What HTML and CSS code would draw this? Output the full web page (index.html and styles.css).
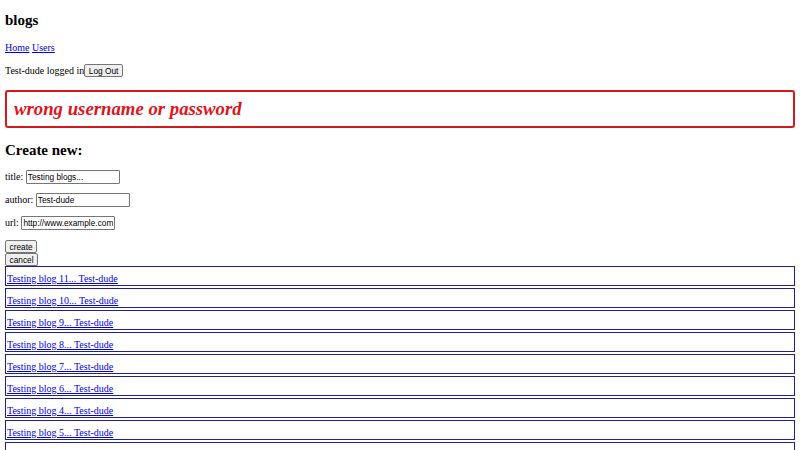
FILE: index.html
```html
<!DOCTYPE html>
<html>
<head>
<meta charset="utf-8">
<link rel="stylesheet" href="styles.css">
</head>
<body>
  <h2 class="title title-top">blogs</h2>
  <div class="nav"><a href="#">Home</a> <a href="#">Users</a></div>
  <p class="login">Test-dude logged in<button class="btn">Log Out</button></p>
  <div class="error">wrong username or password</div>
  <h2 class="title title-form">Create new:</h2>
  <form class="form">
    <div class="field">title: <input class="inp" value="Testing blogs..."></div>
    <div class="field">author: <input class="inp" value="Test-dude"></div>
    <div class="field">url: <input class="inp" value="http://www.example.com"></div>
    <div class="actions">
      <button class="btn" type="button">create</button>
      <button class="btn" type="button">cancel</button>
    </div>
  </form>
  <div class="blogs">
    <div class="blog"><a href="#">Testing blog 11... Test-dude</a></div>
    <div class="blog"><a href="#">Testing blog 10... Test-dude</a></div>
    <div class="blog"><a href="#">Testing blog 9... Test-dude</a></div>
    <div class="blog"><a href="#">Testing blog 8... Test-dude</a></div>
    <div class="blog"><a href="#">Testing blog 7... Test-dude</a></div>
    <div class="blog"><a href="#">Testing blog 6... Test-dude</a></div>
    <div class="blog"><a href="#">Testing blog 4... Test-dude</a></div>
    <div class="blog"><a href="#">Testing blog 5... Test-dude</a></div>
    <div class="blog"><a href="#">Testing blog 3... Test-dude</a></div>
  </div>
</body>
</html>
```
FILE: styles.css
```css
html, body {
  background: #fff;
}
body {
  margin: 5px;
  font-family: "Liberation Serif", "Times New Roman", serif;
  font-size: 10px;
  color: #000;
}
a {
  color: #0000ee;
}
.title {
  font-size: 15px;
  font-weight: bold;
  margin: 12.5px 0;
}
.title-top {
  margin-top: 6.5px;
  margin-bottom: 13.5px;
}
.title-form {
  margin-top: 13.5px;
  margin-bottom: 11.5px;
}
.nav {
  margin: 0;
}
.login {
  margin: 11px 0;
}
.btn {
  font-family: "Liberation Sans", Arial, sans-serif;
  font-size: 8.3px;
  padding: 0.5px 3.5px;
  margin: 0;
  border: 1px solid #767676;
  border-radius: 2px;
  background: #efefef;
  color: #000;
}
.error {
  color: #e0141c;
  font-size: 18.75px;
  font-weight: bold;
  font-style: italic;
  border: 2px solid #d5181e;
  border-radius: 3px;
  padding: 6px 7px;
  margin-top: 13px;
}
.form {
  margin: 0;
}
.field {
  margin: 9px 0;
}
.inp {
  font-family: "Liberation Sans", Arial, sans-serif;
  font-size: 8.3px;
  width: 90px;
  padding: 1px 1px;
  border: 1px solid #767676;
  border-radius: 1px;
}
.actions {
  display: flex;
  flex-direction: column;
  align-items: flex-start;
  margin-top: 10px;
}
.blogs {
  display: flex;
  flex-direction: column;
  gap: 2.5px;
}
.blog {
  border: 1px solid #1f1f9e;
  padding: 5.5px 0 0 1px;
  line-height: 12px;
}
```
